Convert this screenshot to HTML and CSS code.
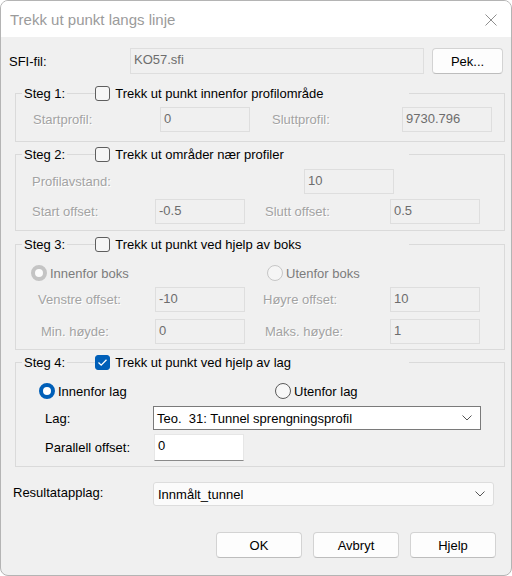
FILE: index.html
```html
<!DOCTYPE html>
<html lang="no">
<head>
<meta charset="utf-8">
<title>Trekk ut punkt langs linje</title>
<link rel="stylesheet" href="styles.css">
</head>
<body>
<div class="window">
  <div class="titlebar">
    <span class="title">Trekk ut punkt langs linje</span>
    <svg class="close" width="12" height="12" viewBox="0 0 12 12"><path d="M0.5 0.5 L11.5 11.5 M11.5 0.5 L0.5 11.5" stroke="#8f8f8f" stroke-width="1" fill="none"/></svg>
  </div>
  <div class="content">
    <div class="file-row">
      <span class="lbl file-lbl">SFI-fil:</span>
      <div class="field disabled file-in">KO57.sfi</div>
      <button class="btn pek">Pek...</button>
    </div>

    <div class="group g1">
      <div class="group-head">
        <span class="cap">Steg 1:</span>
        <span class="chk-wrap"><span class="check"></span><span class="chk-text">Trekk ut punkt innenfor profilområde</span></span>
      </div>
      <div class="row g1-row">
        <span class="lbl dis g1-l1">Startprofil:</span>
        <div class="field disabled w90">0</div>
        <span class="lbl dis g1-l2">Sluttprofil:</span>
        <div class="field disabled w90">9730.796</div>
      </div>
    </div>

    <div class="group g2">
      <div class="group-head">
        <span class="cap">Steg 2:</span>
        <span class="chk-wrap"><span class="check"></span><span class="chk-text">Trekk ut områder nær profiler</span></span>
      </div>
      <div class="row g2-row1">
        <span class="lbl dis g2-la">Profilavstand:</span>
        <div class="field disabled w90">10</div>
      </div>
      <div class="row g2-row2">
        <span class="lbl dis g2-l1">Start offset:</span>
        <div class="field disabled w90">-0.5</div>
        <span class="lbl dis g2-l2">Slutt offset:</span>
        <div class="field disabled w90">0.5</div>
      </div>
    </div>

    <div class="group g3">
      <div class="group-head">
        <span class="cap">Steg 3:</span>
        <span class="chk-wrap"><span class="check"></span><span class="chk-text">Trekk ut punkt ved hjelp av boks</span></span>
      </div>
      <div class="row radio-row g3-radios">
        <span class="radio-item g3-r1"><span class="radio on dis-radio"></span><span class="radio-text dis-text">Innenfor boks</span></span>
        <span class="radio-item"><span class="radio dis-radio"></span><span class="radio-text dis-text">Utenfor boks</span></span>
      </div>
      <div class="row g3-row1">
        <span class="lbl dis g3-a1">Venstre offset:</span>
        <div class="field disabled w90">-10</div>
        <span class="lbl dis g3-a2">Høyre offset:</span>
        <div class="field disabled w90">10</div>
      </div>
      <div class="row g3-row2">
        <span class="lbl dis g3-b1">Min. høyde:</span>
        <div class="field disabled w90">0</div>
        <span class="lbl dis g3-b2">Maks. høyde:</span>
        <div class="field disabled w90">1</div>
      </div>
    </div>

    <div class="group g4">
      <div class="group-head">
        <span class="cap">Steg 4:</span>
        <span class="chk-wrap"><span class="check checked"><svg width="11" height="9" viewBox="0 0 11 9"><path d="M1.5 4.5 L4.2 7.2 L9.5 1.8" stroke="#fff" stroke-width="1.3" fill="none"/></svg></span><span class="chk-text">Trekk ut punkt ved hjelp av lag</span></span>
      </div>
      <div class="row radio-row g4-radios">
        <span class="radio-item g4-r1"><span class="radio on"></span><span class="radio-text">Innenfor lag</span></span>
        <span class="radio-item"><span class="radio"></span><span class="radio-text">Utenfor lag</span></span>
      </div>
      <div class="row g4-lag">
        <span class="lbl g4-l">Lag:</span>
        <div class="select lag-select"><span class="sel-text">Teo.&nbsp; 31: Tunnel sprengningsprofil</span><svg class="chev" width="10" height="6" viewBox="0 0 10 6"><path d="M0.5 0.5 L5 5 L9.5 0.5" stroke="#555" stroke-width="1" fill="none"/></svg></div>
      </div>
      <div class="row g4-par">
        <span class="lbl g4-p">Parallell offset:</span>
        <div class="field edit par-in">0</div>
      </div>
    </div>

    <div class="row result-row">
      <span class="lbl res-l">Resultatapplag:</span>
      <div class="select combo res-select"><span class="sel-text">Innmålt_tunnel</span><svg class="chev" width="10" height="6" viewBox="0 0 10 6"><path d="M0.5 0.5 L5 5 L9.5 0.5" stroke="#555" stroke-width="1" fill="none"/></svg></div>
    </div>

    <div class="buttons">
      <button class="btn act">OK</button>
      <button class="btn act">Avbryt</button>
      <button class="btn act">Hjelp</button>
    </div>
  </div>
</div>
</body>
</html>
```

FILE: styles.css
```css
html, body {
  margin: 0;
  padding: 0;
  background: #ffffff;
}

body {
  font-family: "Liberation Sans", Arial, sans-serif;
  font-size: 13px;
  color: #000;
}

.window {
  width: 512px;
  height: 576px;
  box-sizing: border-box;
  border: 1px solid #b4b4b4;
  border-radius: 8px;
  overflow: hidden;
  background: #f0f0f0;
  display: flex;
  flex-direction: column;
}

.titlebar {
  flex: none;
  height: 36px;
  background: #ffffff;
  display: flex;
  align-items: center;
  justify-content: space-between;
  padding: 0 14px 0 9px;
}

.title {
  font-size: 15px;
  color: #9b9b9b;
}

.close {
  display: block;
  margin-top: 1px;
}

.content {
  flex: 1;
  padding: 11px 0 0 8px;
}

/* generic */
.row {
  display: flex;
  align-items: center;
}

.lbl {
  flex: none;
  line-height: 17px;
  white-space: nowrap;
}

.lbl.dis {
  color: #a3a3a3;
  text-shadow: 1px 1px 0 #ffffff;
}

.field {
  flex: none;
  box-sizing: border-box;
  height: 25px;
  padding: 2px 3px 0 3px;
  line-height: 17px;
  white-space: nowrap;
}

.field.disabled {
  background: #f0f0f0;
  border: 1px solid #dedede;
  color: #6d6d6d;
}

.field.edit {
  background: #ffffff;
  border: 1px solid #e6e6e6;
  border-bottom-color: #8a8a8a;
  color: #000;
}

.w90 {
  width: 90px;
}

/* file row */
.file-row {
  display: flex;
  align-items: center;
  height: 26px;
}

.file-lbl {
  width: 121px;
  margin-top: 1px;
}

.file-in {
  width: 294px;
  height: 26px;
}

.btn {
  flex: none;
  box-sizing: border-box;
  font-family: "Liberation Sans", Arial, sans-serif;
  font-size: 13px;
  color: #000;
  background: #fdfdfd;
  border: 1px solid #d3d3d3;
  border-bottom-color: #bdbdbd;
  border-radius: 4px;
  padding: 0;
  margin: 0;
}

.pek {
  width: 71px;
  height: 26px;
  margin-left: 8px;
}

/* groups */
.group {
  box-sizing: border-box;
  width: 490px;
  margin-left: 6px;
  border: 1px solid #dadada;
}

.group-head {
  display: flex;
  align-items: center;
  height: 17px;
  margin-top: -9px;
  margin-left: 6px;
}

.cap {
  background: #f0f0f0;
  padding: 0 2px 0 2px;
  line-height: 17px;
}

.chk-wrap {
  display: flex;
  align-items: center;
  background: #f0f0f0;
  margin-left: 28px;
  width: 314px;
  height: 17px;
}

.check {
  flex: none;
  box-sizing: border-box;
  width: 15px;
  height: 15px;
  border: 1px solid #5e5e5e;
  border-radius: 3px;
  background: #f6f6f6;
  display: flex;
  align-items: center;
  justify-content: center;
}

.check.checked {
  background: #005fb8;
  border-color: #005fb8;
}

.check svg {
  display: block;
}

.chk-text {
  margin-left: 5px;
  line-height: 17px;
  white-space: nowrap;
}

/* radios */
.radio-row {
  height: 16px;
}

.radio-item {
  display: flex;
  align-items: center;
  flex: none;
}

.radio {
  flex: none;
  box-sizing: border-box;
  width: 16px;
  height: 16px;
  border-radius: 50%;
  border: 1px solid #5a5a5a;
  background: #f7f7f7;
}

.radio.on {
  border: 4.5px solid #005fb8;
  background: #ffffff;
}

.radio.dis-radio {
  border-color: #c6c6c6;
  background: #f5f5f5;
}

.radio.on.dis-radio {
  border: 4.5px solid #c4c4c4;
  background: #fbfbfb;
}

.radio-text {
  margin-left: 3px;
  line-height: 17px;
  white-space: nowrap;
}

.dis-text {
  color: #7c7c7c;
}

/* Steg 1 */
.g1 {
  margin-top: 19px;
  padding-bottom: 9px;
}

.g1-row {
  margin-top: 5px;
  padding-left: 17px;
}

.g1-l1 {
  width: 127px;
}

.g1-l2 {
  width: 130px;
  margin-left: 22px;
}

/* Steg 2 */
.g2 {
  margin-top: 12px;
  padding-bottom: 6px;
}

.g2-row1 {
  margin-top: 6px;
  padding-left: 16px;
}

.g2-la {
  width: 272px;
}

.g2-row2 {
  margin-top: 5px;
  padding-left: 16px;
}

.g2-l1 {
  width: 123px;
}

.g2-l2 {
  width: 125px;
  margin-left: 20px;
}

/* Steg 3 */
.g3 {
  margin-top: 13px;
  padding-bottom: 5px;
}

.g3-radios {
  margin-top: 12px;
  padding-left: 15px;
}

.g3-r1 {
  width: 236px;
}

.g3-row1 {
  margin-top: 6px;
  padding-left: 22px;
}

.g3-a1 {
  width: 117px;
}

.g3-a2 {
  width: 127px;
  margin-left: 18px;
}

.g3-row2 {
  margin-top: 7px;
  padding-left: 25px;
}

.g3-b1 {
  width: 114px;
}

.g3-b2 {
  width: 125px;
  margin-left: 20px;
}

/* Steg 4 */
.g4 {
  margin-top: 12px;
  padding-bottom: 5px;
}

.g4-radios {
  margin-top: 12px;
  padding-left: 23px;
}

.g4-r1 {
  width: 236px;
}

.g4-lag {
  margin-top: 7px;
  padding-left: 29px;
}

.g4-l {
  width: 108px;
}

.select {
  flex: none;
  box-sizing: border-box;
  height: 24px;
  display: flex;
  align-items: center;
  justify-content: space-between;
  padding: 0 8px 0 3px;
  white-space: nowrap;
}

.lag-select {
  width: 328px;
  background: #ffffff;
  border: 1px solid #7a7a7a;
}

.combo {
  background: #fbfbfb;
  border: 1px solid #dddddd;
  border-radius: 3px;
  padding-left: 4px;
}

.res-select {
  width: 341px;
}

.chev {
  display: block;
  flex: none;
}

.g4-par {
  margin-top: 4px;
  padding-left: 29px;
}

.g4-p {
  width: 109px;
}

.par-in {
  width: 90px;
  height: 27px;
}

/* result row */
.result-row {
  margin-top: 15px;
}

.res-l {
  width: 140px;
  margin-left: 4px;
  margin-top: -4px;
}

/* buttons */
.buttons {
  display: flex;
  justify-content: flex-end;
  gap: 11px;
  margin-top: 26px;
  padding-right: 15px;
}

.act {
  width: 86px;
  height: 26px;
}
```
